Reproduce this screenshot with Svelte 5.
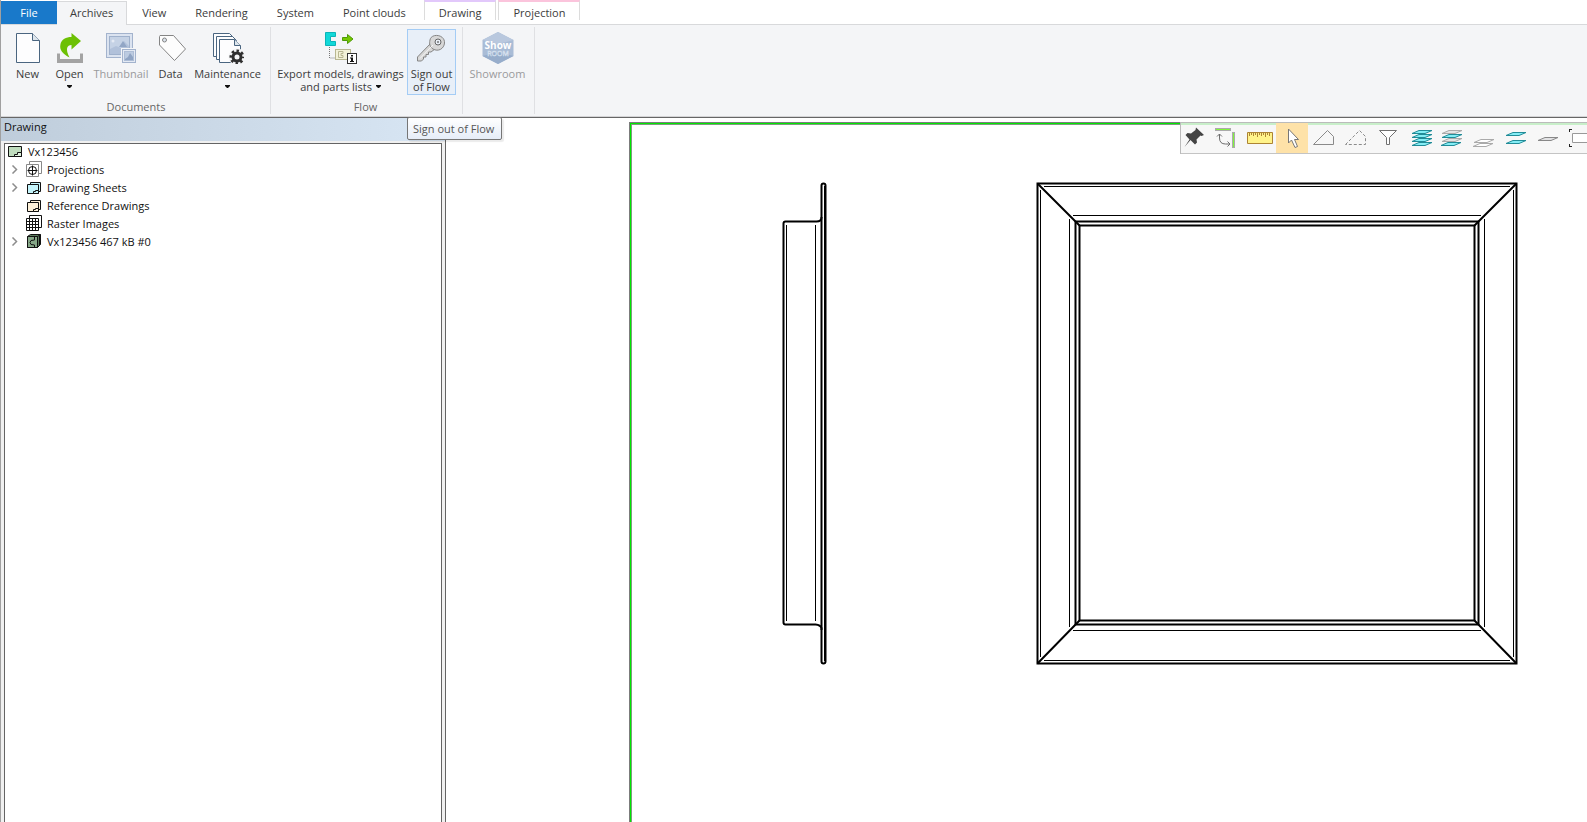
<script>
  const tabs = [
    { label: 'File', kind: 'file' },
    { label: 'Archives', kind: 'active' },
    { label: 'View', kind: 'plain' },
    { label: 'Rendering', kind: 'plain' },
    { label: 'System', kind: 'plain' },
    { label: 'Point clouds', kind: 'plain' },
    { label: 'Drawing', kind: 'context violet' },
    { label: 'Projection', kind: 'context pink' }
  ];

  const nodes = [
    { label: 'Projections', icon: 'projections', open: true },
    { label: 'Drawing Sheets', icon: 'sheets', fill: '#c4f4fb', open: true },
    { label: 'Reference Drawings', icon: 'sheets', fill: '#fdf0d8', open: false },
    { label: 'Raster Images', icon: 'raster', open: false },
    { label: 'Vx123456 467 kB #0', icon: 'part', open: true }
  ];

  const tools = ['Pin', 'Rotate', 'Measure', 'Select', 'Polygon', 'Dashed polygon', 'Filter',
    'All layers', 'Alternate layers', 'Empty layers', 'Two layers', 'Single layer', 'Frame'];
</script>

{#snippet layer(x, y, fill, stroke)}
  <path d="M{x} {y + 3}L{x + 7} {y}H{x + 20}L{x + 13} {y + 3}Z" {fill} {stroke} />
{/snippet}

{#snippet caret()}
  <svg class="caret" width="5" height="3" viewBox="0 0 5 3" aria-hidden="true"><path d="M0 0h5v1L3 3H2L0 1z" fill="#111" /></svg>
{/snippet}

<div class="app">
  <nav class="tabs" aria-label="Ribbon tabs">
    {#each tabs as tab}
      <button class="tab {tab.kind}">{tab.label}</button>
    {/each}
  </nav>

  <div class="ribbon">
    <section class="group documents">
      <div class="items">
        <button class="cmd new">
          <svg width="32" height="32" viewBox="0 0 32 32" fill="#fdfdfe" stroke="#4a6580">
            <path d="M4.5 1.5h16l7 7v22h-23z" /><path d="M20.5 1.5v7h7" fill="#dde5ec" />
          </svg>
          <span>New</span>
        </button>
        <button class="cmd open">
          <svg width="32" height="32" viewBox="0 0 32 32">
            <path d="M3 21.500h3V27h20v-5.500h3V31H3z" fill="#a3a3a3" />
            <path d="M17.500 1L27 9l-9.500 8.500V13C13 13 11 17 15.500 25.500C9 22 5 18 6.500 12C7.500 7.500 12 5 17.500 5z" fill="#6cc004" />
          </svg>
          <span>Open</span>
          {@render caret()}
        </button>
        <button class="cmd thumb" disabled>
          <svg width="32" height="32" viewBox="0 0 32 32">
            <rect x="1.500" y="1.500" width="26" height="24" fill="#dbe3f0" stroke="#a3b3cd" />
            <rect x="4.500" y="4.500" width="20" height="18" fill="#c5d2e5" stroke="#9fb1cc" />
            <path d="M5 17l6-3 5 2 3-7 5 5v8H5z" fill="#b1c1da" /><circle cx="8" cy="9" r="1.500" fill="#e4eaf4" />
            <path d="M14 15l4-6 4 6z" fill="#92a6c5" />
            <rect x="16" y="16" width="16" height="16" fill="#f4f5f7" />
            <rect x="17.500" y="17.500" width="13" height="13" fill="#e4eaf4" stroke="#a3b3cd" />
            <rect x="19.500" y="19.500" width="9" height="9" fill="#bccbe1" stroke="#adbdd6" />
            <path d="M20 27l3-2 2-4 3 4v3h-8z" fill="#8fa4c4" />
          </svg>
          <span>Thumbnail</span>
        </button>
        <button class="cmd data">
          <svg width="32" height="32" viewBox="0 0 32 32" fill="#fdfdfd" stroke="#858585">
            <path d="M5 3.500h13.500L30.500 17L19.500 28.500L4.500 13V4.500z" /><circle cx="9.500" cy="8" r="2" fill="#dce4ee" />
          </svg>
          <span>Data</span>
        </button>
        <button class="cmd maint">
          <svg width="32" height="32" viewBox="0 0 32 32" fill="#fdfdfe" stroke="#4a6580">
            <path d="M1.500 1.500h16l4 4v19h-20z" /><path d="M4.500 4.500h16l4 4v19h-20z" />
            <path d="M7.500 7.500h15l6 6v17h-21z" /><path d="M22.500 7.500v6h6" fill="#dde5ec" />
            <circle cx="25" cy="25" r="8.500" fill="#f4f5f7" stroke="none" />
            <circle cx="25" cy="25" r="4" fill="none" stroke="#2f2f2f" stroke-width="3" />
            <circle cx="25" cy="25" r="6" fill="none" stroke="#2f2f2f" stroke-width="3" stroke-dasharray="2.400 2.312" stroke-dashoffset="1.200" />
          </svg>
          <span>Maintenance</span>
          {@render caret()}
        </button>
      </div>
      <h2>Documents</h2>
    </section>

    <section class="group flow">
      <div class="items">
        <button class="cmd export">
          <svg width="32" height="32" viewBox="0 0 32 32">
            <path d="M.5.500h10v4h-5v5h5v4H.5z" fill="#10d8d8" stroke="#0bb3b8" />
            <path d="M17.500 5.500h5v-3L28 7l-5.500 4.500v-3h-5z" fill="#74c800" stroke="#4f9a08" />
            <path d="M4.500 15v11H10" fill="none" stroke="#777" stroke-dasharray="1 1" />
            <rect x="10.500" y="17.500" width="15" height="10" fill="#f2f1d8" stroke="#b9b791" />
            <path d="M18 19.500h-4.500v6H18v-2h-2v-2h2z" fill="none" stroke="#b9b791" />
            <rect x="22.500" y="21.500" width="9" height="10" fill="#fff" stroke="#333" />
            <path d="M26 23h2v1.500h-2zM25 25.500h3V29h1v1h-4v-1h1v-2.500h-1z" fill="#111" />
          </svg>
          <span>Export models, drawings<br />and parts lists {@render caret()}</span>
        </button>
        <button class="cmd sign">
          <svg width="32" height="32" viewBox="0 0 32 32" fill="#d7d7d7" stroke="#858585">
            <path d="M15 11L1.500 25v4h4l2-2v-2h2.500v-2.500h2.500V20H15l4-3z" />
            <path d="M14 8c1-7 15-6 14.500 3c-.5 6-6.500 9-11.500 6c-3-2-4-5-3-9z" />
            <path d="M4 26.500L17 13" fill="none" stroke="#f5f5f5" />
            <circle cx="22" cy="10" r="3" fill="#e8eef6" stroke="#666" /><circle cx="22" cy="10" r="1" stroke="none" fill="#777" />
          </svg>
          <span>Sign out<br />of Flow</span>
        </button>
      </div>
      <h2>Flow</h2>
    </section>

    <section class="group show">
      <div class="items">
        <button class="cmd showroom" disabled>
          <svg width="32" height="32" viewBox="0 0 32 32">
            <path d="M16 0l15.500 8v16L16 32L.5 24V8z" fill="#a9bcd6" />
            <path d="M16 0l15.500 8L16 12L.5 8z" fill="#b9c8de" /><path d="M.5 24L16 20l15.500 4L16 32z" fill="#97adcb" />
            <text x="16" y="17" text-anchor="middle" font-size="10" font-weight="700" fill="#fff">Show</text>
            <text x="16" y="24" text-anchor="middle" font-size="7" fill="none" stroke="#d5e0ee" stroke-width=".5">ROOM</text>
          </svg>
          <span>Showroom</span>
        </button>
      </div>
    </section>
  </div>

  <main class="work">
    <aside class="panel">
      <h1>Drawing</h1>
      <div class="tree">
        <div class="row root">
          <svg width="16" height="16" viewBox="0 0 16 16" stroke="#111" fill="#bfdcbd"><path d="M1.500 3.500h13v10h-13z" /><path d="M14.500 9.500h-4v2h-3v2h7z" fill="#e0f0de" /></svg>
          <span>Vx123456</span>
        </div>
        {#each nodes as node}
          <div class="row">
            <span class="toggle">
              {#if node.open}
                <svg width="7" height="9" viewBox="0 0 7 9" fill="none" stroke="#8d8d8d" stroke-width="1.500"><path d="M1.500.500l4 4-4 4" /></svg>
              {/if}
            </span>
            <svg width="16" height="16" viewBox="0 0 16 16" stroke="#111" fill="#fff">
              {#if node.icon === 'projections'}
                <path d="M3.500.500h12v12h-12z" stroke="#888" /><path d="M.5 3.500h12v12H.5z" stroke="#888" />
                <circle cx="6.500" cy="9.500" r="4" /><path d="M1.500 9.500h10M6.500 4.500v10" />
              {:else if node.icon === 'sheets'}
                <path d="M4.500 3.500h10v9h-10z" fill={node.fill} />
                <path d="M1.500 5.500h11v9h-11z" fill={node.fill} /><path d="M12.500 11.500h-3v1h-2v2h5z" fill={node.fill} />
              {:else if node.icon === 'raster'}
                <path d="M3.500.500h12v12h-12z" /><path d="M.5 3.500h12v12H.5z" />
                <path d="M3.500 3.500v12M6.500 3.500v12M9.500 3.500v12M.5 6.500h12M.5 9.500h12M.5 12.500h12" fill="none" />
              {:else}
                <path d="M1.500 3.500l3-2h10v10l-3 3h-10z" fill="#5b7d5d" /><path d="M1.500 3.500h10v11h-10z" fill="#86a888" />
                <path d="M11.500 3.500l3-2M13.500 2.500v10" fill="none" /><path d="M8.500 4v3L5 7.500l-1 2 1 2 3.500.5v2" fill="none" />
              {/if}
            </svg>
            <span>{node.label}</span>
          </div>
        {/each}
      </div>
    </aside>

    <div class="canvas">
      <div class="sheet"></div>
      <svg class="drawing" width="1141" height="704" viewBox="446 118 1141 704" fill="none" stroke="#000" aria-label="Side and front view of the frame">
        <g stroke-width="2">
          <path d="M821.500 218V185.500q0-2 2-2t2 2V661.500q0 2-2 2t-2-2V628q-1-3-6-3.500H785.500q-2 0-2-2V223.500q0-2 2-2H816.500q5 0 5-4z" />
          <path d="M821.500 217V630" /><path d="M825 186V661" />
          <path d="M1037.500 183.500h479v480h-479z" /><path d="M1075.500 221.500h403v403h-403z" /><path d="M1079.500 225.500h395v395h-395z" />
          <path d="M1037.500 183.500l42 42M1516.500 183.500l-42 42M1037.500 663.500l42-43M1516.500 663.500l-42-43" />
        </g>
        <path d="M786.500 225v396M815.500 225v396" />
        <path d="M1044 186.500h466M1044 660.500h466M1040.500 190v467M1513.500 190v467M1073 215.500h408M1073 630.500h408M1069.500 219v408M1484.500 219v408" />
      </svg>

      <div class="toolbar">
        {#each tools as tool, i}
          <button class:on={i === 3} aria-label={tool}>
            <svg width="32" height="30" viewBox="0 0 32 30" fill="none" stroke="#8a8a8a">
              {#if i === 0}
                <path d="M16 4.500l8 7.500-2.500 1-1-.5-4 4 .5 3-2 2-4.500-4.500L4.500 24l5-7.500L5.500 12l2-2 3.500.5 4.500-3.500z" fill="#444" stroke="none" />
              {:else if i === 1}
                <path d="M3 6.500h16M21.500 9v16" stroke="#aaa" stroke-width="3" /><path d="M4 6.500h14M21.500 10v14" stroke="#82f53c" />
                <path d="M7.500 11v4q0 6 6 6h4M5 13.500L7.500 11l2.500 2.500M15.500 18.500L18 21l-2.500 2.500" stroke="#6d6d6d" />
              {:else if i === 2}
                <path d="M3.500 9.500h25v11h-25z" fill="#fff38a" stroke="#ad8434" />
                <path d="M5.500 10v3M7.500 10v2M9.500 10v3M11.500 10v2M13.500 10v4M15.500 10v2M17.500 10v3M19.500 10v2M21.500 10v4M23.500 10v2M25.500 10v3" stroke="#ad8434" />
              {:else if i === 3}
                <path d="M12.500 6v14l3-3 3.500 7.500 2.500-1L18.500 16.500h4z" fill="#fff" stroke="#777" />
              {:else if i === 4}
                <path d="M5.500 21.500l14-14 6 6v8z" />
              {:else if i === 5}
                <path d="M5.500 21.500l14-14 6 6v8z" stroke-dasharray="3 2" />
              {:else if i === 6}
                <path d="M7.500 7.500h17l-7 7v7h-3v-7z" fill="#fff" stroke="#707070" />
              {:else if i === 7}
                {@render layer(8, 19.5, '#84edf5', '#218c98')}{@render layer(8, 15.5, '#84edf5', '#218c98')}
                {@render layer(8, 11.5, '#84edf5', '#218c98')}{@render layer(8, 7.5, '#84edf5', '#218c98')}
              {:else if i === 8}
                {@render layer(5, 19.5, '#84edf5', '#218c98')}{@render layer(6, 15.5, '#e4e4e4', '#aaa')}
                {@render layer(6, 11.5, '#84edf5', '#218c98')}{@render layer(6, 7.5, '#e4e4e4', '#aaa')}
              {:else if i === 9}
                {@render layer(5, 20.5, '#fff', '#aaa')}{@render layer(6, 16.5, '#fff', '#aaa')}
              {:else if i === 10}
                {@render layer(6, 17.5, '#84edf5', '#218c98')}{@render layer(6, 9.5, '#84edf5', '#218c98')}
              {:else if i === 11}
                {@render layer(6, 14.5, '#e2e2e4', '#888')}
              {:else}
                <path d="M32 10.500H8.500v9H32" fill="#fff" stroke="#999" /><path d="M5 6h3v1H6v2H5zM5 21h1v2h2v1H5z" fill="#222" stroke="none" />
              {/if}
            </svg>
          </button>
        {/each}
      </div>
    </div>
    <div class="tip" role="tooltip">Sign out of Flow</div>
  </main>
</div>

<style>
  :global(body) { margin: 0; overflow: hidden; background: #fff; }
  .app {
    box-sizing: border-box;
    display: flex;
    flex-direction: column;
    height: 100vh;
    border-left: 1px solid #a0a0a0;
    font: 11px/13px 'Open Sans', 'Noto Sans', sans-serif;
    color: #3b3b3b;
  }
  button { margin: 0; padding: 0; border: 0; background: none; font: inherit; color: inherit; }
  h1, h2 { margin: 0; font: inherit; }
  svg { display: block; flex: none; }

  .tabs { display: flex; height: 25px; padding-top: 1px; box-sizing: border-box; box-shadow: inset 0 -1px #d8d9db; }
  .tab { padding: 0 14px 2px; white-space: nowrap; }
  .plain { margin-left: 1px; }
  .file { width: 56px; margin-bottom: 1px; padding-bottom: 1px; background: #1979ca; color: #fff; }
  .active { padding: 0 13px 2px; border: 1px solid #d8d9db; border-width: 1px 1px 0 0; background: #f4f5f7; }
  .context { margin-top: -1px; margin-bottom: 5px; padding: 3px 14px 0; border: 1px solid #dcdcdc; border-bottom: 0; }
  .violet { margin-left: 4px; border-top: 2px solid #e2c8fb; }
  .pink { margin-left: 2px; border-top: 2px solid #fbc4dc; }

  .ribbon { display: flex; height: 92px; padding-top: 2px; box-sizing: border-box; background: #f4f5f7; border-bottom: 1px solid #d4d4d6; }
  .group { display: flex; flex-direction: column; height: 87px; box-sizing: border-box; border-right: 1px solid #dfe0e3; }
  .documents { padding: 2px 5px 0 6px; }
  .flow { padding: 2px 6px 0 4px; }
  .flow .items { gap: 1px; }
  .show { padding: 2px 6px 0 4px; }
  .items { display: flex; height: 66px; }
  .cmd { display: flex; flex-direction: column; align-items: center; justify-content: flex-start; box-sizing: border-box; padding-top: 3px; white-space: nowrap; }
  .cmd > span { margin-top: 3px; }
  .cmd > .caret { margin-top: 5px; }
  .cmd span .caret { display: inline-block; margin-left: 1px; vertical-align: 3px; }
  .cmd:disabled { color: #9a9a9c; }
  .new { width: 41px; }
  .open { width: 43px; }
  .thumb { width: 60px; }
  .data { width: 39px; }
  .maint { width: 75px; }
  .export { width: 131px; }
  .sign { width: 49px; border: 1px solid #a4ccf5; background: #e8eff8; padding-top: 2px; }
  .showroom { width: 61px; }
  h2 { margin-top: 5px; text-align: center; color: #666; }

  .work { position: relative; display: flex; flex: 1; min-height: 0; border-top: 1px solid #666; }
  .panel { display: flex; flex-direction: column; width: 445px; box-sizing: border-box; border-right: 1px solid #646464; background: #f0f0f0; color: #111; }
  h1 { height: 23px; padding: 2px 3px 0; box-sizing: border-box; background: linear-gradient(90deg, #bfcddb, #d8e6f4); }
  .tree { flex: 1; margin: 2px 3px 0; border: 1px solid #646464; border-bottom: 0; background: #fff; }
  .row { display: flex; align-items: center; height: 18px; }
  .row > span:last-child { margin-left: 5px; }
  .root { height: 14px; margin-bottom: 2px; padding-left: 2px; }
  .toggle { width: 15px; padding-left: 6px; }

  .canvas { position: relative; flex: 1; min-width: 0; overflow: hidden; }
  .sheet { position: absolute; left: 183px; top: 4px; right: -4px; bottom: -4px; border: 1px solid #7c7c7c; box-shadow: inset 0 0 0 1px #00e800, inset 0 0 0 2px #7c9c7c; }
  .drawing { position: absolute; left: 0; top: 0; }
  .toolbar { position: absolute; left: 734px; right: 0; top: 4px; display: flex; height: 32px; overflow: hidden; background: #f7f7f7; box-shadow: inset 1px 1px #bbb, inset 0 3px #c8efc9, inset 0 -1px #c4c4c4; }
  .toolbar button { flex: 0 0 32px; height: 30px; margin-top: 1px; }
  .toolbar .on { background: #fee2a8; }

  .tip {
    position: absolute;
    left: 406px;
    top: -1px;
    padding: 4px 7px 3px 5px;
    border: 1px solid #767676;
    border-radius: 2px;
    background: linear-gradient(#fff, #e6edf8);
    box-shadow: 2px 2px 1px rgba(0, 0, 0, 0.08);
    line-height: 14px;
    color: #555;
  }
</style>
